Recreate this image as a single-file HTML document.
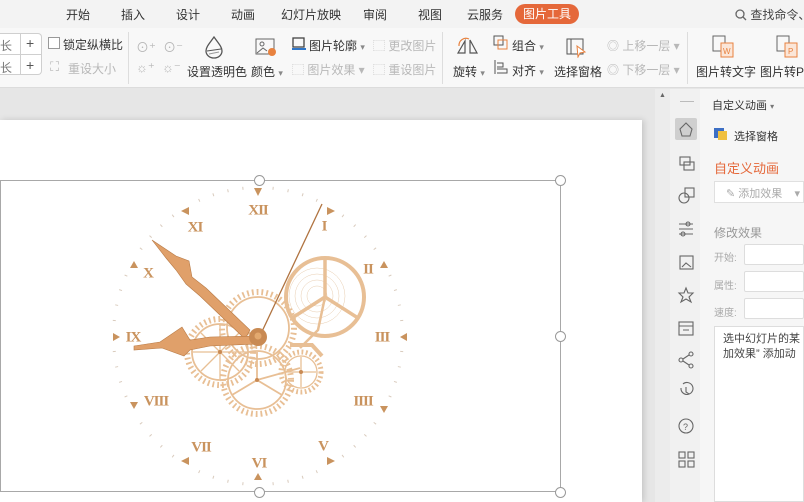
<!DOCTYPE html>
<html><head><meta charset="utf-8">
<style>
*{margin:0;padding:0;box-sizing:border-box}
body{width:804px;height:502px;overflow:hidden;background:#e6e6e6;font-family:"Liberation Sans","Noto Sans CJK SC",sans-serif;font-size:12px;color:#333;position:relative}
.a{position:absolute;white-space:nowrap}
.tab{top:6px;font-size:12px;color:#333}
.g{color:#b8b8b8}
.rb{font-size:12px}
.num{position:absolute;font-family:"Liberation Serif",serif;font-weight:bold;font-size:15px;color:#c9935e;transform:translate(-50%,-50%);letter-spacing:-1px}
</style></head><body>
<div class="a" style="left:0;top:0;width:804px;height:28px;background:#f3f3f3"></div>
<div class="a tab" style="left:66px">开始</div>
<div class="a tab" style="left:121px">插入</div>
<div class="a tab" style="left:176px">设计</div>
<div class="a tab" style="left:231px">动画</div>
<div class="a tab" style="left:281px">幻灯片放映</div>
<div class="a tab" style="left:363px">审阅</div>
<div class="a tab" style="left:418px">视图</div>
<div class="a tab" style="left:467px">云服务</div>
<div class="a" style="left:515px;top:4px;width:64px;height:20px;border-radius:10px;background:#e5683a;color:#fff;text-align:center;line-height:20px;font-size:12px">图片工具</div>
<div class="a" style="left:735px;top:6px;color:#444"><svg width="12" height="12" style="vertical-align:-2px"><circle cx="5" cy="5" r="4" fill="none" stroke="#666" stroke-width="1.3"/><line x1="8" y1="8" x2="11" y2="11" stroke="#666" stroke-width="1.3"/></svg> 查找命令、</div>
<div class="a" style="left:0;top:28px;width:804px;height:60px;background:#f8f8f8;border-bottom:1px solid #dcdcdc"></div>
<div class="a" style="left:0;top:33px;width:42px;height:42px;border:1px solid #cfcfcf;border-left:none;border-radius:0 4px 4px 0;background:#fff"></div>
<div class="a" style="left:0;top:54px;width:42px;height:1px;background:#cfcfcf"></div>
<div class="a" style="left:20px;top:33px;width:1px;height:42px;background:#cfcfcf"></div>
<div class="a" style="left:0;top:37px;color:#777">长</div>
<div class="a" style="left:0;top:59px;color:#777">长</div>
<div class="a" style="left:26px;top:35px;font-size:14px;color:#555">+</div>
<div class="a" style="left:26px;top:57px;font-size:14px;color:#555">+</div>
<div class="a" style="left:48px;top:37px;width:12px;height:12px;border:1px solid #999;background:#fff"></div>
<div class="a rb" style="left:63px;top:36px">锁定纵横比</div>
<div class="a rb g" style="left:68px;top:60px">重设大小</div>
<div class="a g" style="left:50px;top:59px;font-size:13px">⛶</div>
<div class="a" style="left:128px;top:32px;width:1px;height:52px;background:#ddd"></div>
<div class="a g" style="left:136px;top:37px;font-size:13px">⊙⁺&nbsp; ⊙⁻</div>
<div class="a g" style="left:136px;top:60px;font-size:13px">☼⁺&nbsp; ☼⁻</div>
<svg class="a" style="left:203px;top:35px" width="22" height="24"><path d="M11 2 C6 9 3 12 3 16 A8 7 0 0 0 19 16 C19 12 16 9 11 2Z" fill="none" stroke="#555" stroke-width="1.3"/><path d="M4 16 L18 14" stroke="#555"/><path d="M6 19 L16 17" stroke="#999"/></svg>
<div class="a rb" style="left:187px;top:63px">设置透明色</div>
<svg class="a" style="left:255px;top:37px" width="22" height="20"><rect x="1" y="2" width="18" height="15" fill="none" stroke="#666"/><circle cx="7" cy="7" r="2" fill="none" stroke="#666"/><path d="M2 16 L8 11 L12 14" fill="none" stroke="#666"/><circle cx="17" cy="15" r="4" fill="#e8823f"/></svg>
<div class="a rb" style="left:251px;top:63px">颜色 <span style="color:#888;font-size:9px">▾</span></div>
<svg class="a" style="left:292px;top:37px" width="14" height="14"><rect x="1" y="1" width="11" height="9" fill="none" stroke="#444" stroke-width="1.3"/><rect x="0" y="11" width="14" height="2" fill="#2e75c8"/></svg>
<div class="a rb" style="left:309px;top:37px">图片轮廓 <span style="color:#888;font-size:9px">▾</span></div>
<div class="a rb g" style="left:292px;top:61px">⬚ 图片效果 ▾</div>
<div class="a rb g" style="left:373px;top:37px">⬚ 更改图片</div>
<div class="a rb g" style="left:373px;top:61px">⬚ 重设图片</div>
<div class="a" style="left:442px;top:32px;width:1px;height:52px;background:#ddd"></div>
<svg class="a" style="left:455px;top:36px" width="26" height="20"><path d="M3 17 L10 5 L10 17Z M15 4 L22 17 L15 17Z" fill="none" stroke="#555" stroke-width="1.2"/><path d="M4 10 A7 7 0 0 1 14 3" fill="none" stroke="#e8823f" stroke-width="1.2"/></svg>
<div class="a rb" style="left:453px;top:63px">旋转 <span style="color:#888;font-size:9px">▾</span></div>
<svg class="a" style="left:493px;top:35px" width="16" height="16"><rect x="1" y="1" width="9" height="9" fill="none" stroke="#555"/><rect x="5" y="5" width="9" height="9" fill="none" stroke="#e8823f"/></svg>
<div class="a rb" style="left:512px;top:37px">组合 <span style="color:#888;font-size:9px">▾</span></div>
<svg class="a" style="left:493px;top:59px" width="16" height="16"><path d="M2 1 V15 M4 4 H10 V8 H4 M4 10 H14 V14 H4" fill="none" stroke="#555"/></svg>
<div class="a rb" style="left:512px;top:62px">对齐 <span style="color:#888;font-size:9px">▾</span></div>
<svg class="a" style="left:566px;top:38px" width="22" height="20"><rect x="1" y="1" width="16" height="15" fill="none" stroke="#555"/><line x1="5" y1="1" x2="5" y2="16" stroke="#555"/><path d="M11 8 L19 14 L14 15 L12 19Z" fill="#fff" stroke="#e8823f"/></svg>
<div class="a rb" style="left:554px;top:63px">选择窗格</div>
<div class="a rb g" style="left:607px;top:37px">◎ 上移一层 ▾</div>
<div class="a rb g" style="left:607px;top:61px">◎ 下移一层 ▾</div>
<div class="a" style="left:687px;top:32px;width:1px;height:52px;background:#ddd"></div>
<svg class="a" style="left:711px;top:35px" width="26" height="24"><rect x="2" y="1" width="12" height="15" fill="none" stroke="#666"/><rect x="10" y="8" width="12" height="14" fill="#fbe6d8" stroke="#e8823f"/><text x="12" y="19" font-size="8" fill="#e8823f" font-family="Liberation Sans">W</text></svg>
<div class="a rb" style="left:696px;top:63px">图片转文字</div>
<svg class="a" style="left:775px;top:35px" width="26" height="24"><rect x="2" y="1" width="12" height="15" fill="none" stroke="#666"/><rect x="10" y="8" width="12" height="14" fill="#fbe6d8" stroke="#e8823f"/><text x="13" y="19" font-size="8" fill="#e8823f" font-family="Liberation Sans">P</text></svg>
<div class="a rb" style="left:760px;top:63px">图片转P</div>
<div class="a" style="left:0;top:120px;width:642px;height:382px;background:#fff;box-shadow:2px 0 6px rgba(0,0,0,.15)"></div>
<div class="a" style="left:655px;top:89px;width:15px;height:413px;background:#ececec"></div>
<div class="a" style="left:659px;top:92px;font-size:7px;color:#666">▲</div>
<svg class="a" style="left:0;top:120px" width="642" height="382">
<g transform="translate(0,-120)">
<rect x="0.5" y="180.5" width="560" height="311" fill="none" stroke="#a8a8a8"/>
<g fill="none" stroke="#e8cdb0" stroke-width="0.5">
<circle cx="317" cy="296" r="10"/><circle cx="317" cy="296" r="16"/><circle cx="317" cy="296" r="22"/><circle cx="317" cy="296" r="28"/>
</g>
<g fill="none" stroke="#e8bf95">
<circle cx="325" cy="297" r="39" stroke-width="4"/>
<path d="M325 297 L325 258 M325 297 L292 318 M325 297 L358 318" stroke-width="3.5"/>
<path d="M325 297 L318 330 L300 348" stroke-width="2.5"/>
<circle cx="220" cy="352" r="33" stroke-width="6" stroke-dasharray="1.8 3"/>
<circle cx="220" cy="352" r="28" stroke-width="1.8"/>
<path d="M220 325 V379 M193 352 H247 M201 333 L239 371 M239 333 L201 371" stroke-width="1.3"/>
<circle cx="258" cy="328" r="36" stroke-width="6" stroke-dasharray="1.8 3"/>
<circle cx="258" cy="328" r="31" stroke-width="1.8"/>
<circle cx="257" cy="380" r="34" stroke-width="6" stroke-dasharray="1.8 3"/>
<circle cx="257" cy="380" r="29" stroke-width="1.8"/>
<path d="M257 380 L257 352 M257 380 L232 395 M257 380 L282 395 M257 380 L300 368" stroke-width="1.8"/>
<circle cx="301" cy="372" r="20" stroke-width="5" stroke-dasharray="1.8 2.5"/>
<circle cx="301" cy="372" r="16" stroke-width="1.3"/>
<path d="M286 372 H316 M301 357 V387" stroke-width="1.3"/>
<path d="M290 345 L312 345 L322 356" stroke-width="4"/>
</g>
<g fill="#c98a53"><circle cx="220" cy="352" r="2"/><circle cx="257" cy="380" r="2"/><circle cx="301" cy="372" r="2"/></g>
<g stroke="#d9cbbd" stroke-width="1" id="t"></g>
<g fill="#c9935e">
<path d="M254 188 L262 188 L258 196Z"/><path d="M254 480 L262 480 L258 473Z"/>
<path d="M113 333 L113 341 L120 337Z"/><path d="M407 333 L407 341 L400 337Z"/>
<path d="M327 207 L335 211 L327 215Z"/><path d="M189 207 L181 211 L189 215Z"/>
<path d="M130 268 L134 261 L138 268Z"/><path d="M380 268 L384 261 L388 268Z"/>
<path d="M130 402 L138 402 L134 409Z"/><path d="M380 406 L388 406 L384 413Z"/>
<path d="M189 457 L181 461 L189 465Z"/><path d="M327 457 L335 461 L327 465Z"/>
</g>
<path d="M322 204 L258 340" stroke="#b07340" stroke-width="1.3"/>
<path d="M152 240 L176 256 L189 261 L192 277 L206 288 L250 330 L245 339 L200 296 L186 284 L176 270 L166 258 Z" fill="#e0a06a" stroke="#b87a45" stroke-width="0.6"/>
<path d="M134 346 L160 342 L182 327 L190 340 L210 337 L256 336 L256 344 L210 346 L190 350 L184 356 L162 348 L134 350Z" fill="#e0a06a" stroke="#b87a45" stroke-width="0.6"/>
<circle cx="258" cy="337" r="9" fill="#c98a53"/>
<circle cx="258" cy="336" r="3.5" fill="#e3a96f"/>
</g>
</svg>
<div class="a" style="left:254px;top:175px;width:11px;height:11px;border:1px solid #999;border-radius:50%;background:#fff"></div>
<div class="a" style="left:555px;top:175px;width:11px;height:11px;border:1px solid #999;border-radius:50%;background:#fff"></div>
<div class="a" style="left:555px;top:331px;width:11px;height:11px;border:1px solid #999;border-radius:50%;background:#fff"></div>
<div class="a" style="left:254px;top:487px;width:11px;height:11px;border:1px solid #999;border-radius:50%;background:#fff"></div>
<div class="a" style="left:555px;top:487px;width:11px;height:11px;border:1px solid #999;border-radius:50%;background:#fff"></div>
<div class="num" style="left:258px;top:211px">XII</div>
<div class="num" style="left:324px;top:227px">I</div>
<div class="num" style="left:368px;top:270px">II</div>
<div class="num" style="left:382px;top:338px">III</div>
<div class="num" style="left:363px;top:402px">IIII</div>
<div class="num" style="left:323px;top:447px">V</div>
<div class="num" style="left:259px;top:464px">VI</div>
<div class="num" style="left:201px;top:448px">VII</div>
<div class="num" style="left:156px;top:402px">VIII</div>
<div class="num" style="left:133px;top:338px">IX</div>
<div class="num" style="left:148px;top:274px">X</div>
<div class="num" style="left:195px;top:228px">XI</div>
<div class="a" style="left:670px;top:89px;width:30px;height:413px;background:#f1f1f1"></div>
<div class="a" style="left:680px;top:101px;width:14px;height:1px;background:#bbb"></div>
<div class="a" style="left:675px;top:118px;width:22px;height:22px;background:#cfcfcf;border-radius:2px"></div>
<svg class="a" style="left:677px;top:120px" width="30" height="370">
<g fill="none" stroke="#666" stroke-width="1.1">
<path d="M9 3 L15 9 L13 16 L5 16 L3 9Z"/>
<rect x="3" y="37" width="10" height="8"/><rect x="7" y="42" width="10" height="8"/>
<circle cx="7" cy="78" r="5"/><rect x="8" y="68" width="9" height="9"/>
<path d="M2 104 H16 M2 109 H16 M2 114 H16"/><circle cx="11" cy="104" r="2"/><circle cx="6" cy="114" r="2"/>
<rect x="3" y="136" width="13" height="13"/><path d="M5 147 L9 143 L14 147"/>
<path d="M9 168 L11 173 L16 173 L12 177 L14 182 L9 179 L4 182 L6 177 L2 173 L7 173Z"/>
<rect x="2" y="202" width="14" height="13"/><path d="M2 206 H16 M6 210 H12"/>
<circle cx="4" cy="240" r="2"/><circle cx="14" cy="234" r="2"/><circle cx="14" cy="246" r="2"/><path d="M6 239 L12 235 M6 241 L12 245"/>
<path d="M4 268 A6 6 0 1 0 6 264 M9 267 V272 L12 274"/>
<circle cx="9" cy="306" r="7"/><text x="6" y="310" font-size="9" fill="#666" stroke="none">?</text>
<rect x="2" y="332" width="6" height="6"/><rect x="11" y="332" width="6" height="6"/><rect x="2" y="341" width="6" height="6"/><rect x="11" y="341" width="6" height="6"/>
</g></svg>
<div class="a" style="left:700px;top:89px;width:104px;height:413px;background:#f6f6f6"></div>
<div class="a" style="left:712px;top:97px;font-size:11px">自定义动画 <span style="font-size:8px;color:#777">▾</span></div>
<svg class="a" style="left:713px;top:127px" width="16" height="16"><rect x="1" y="1" width="10" height="10" fill="#3d6fc4"/><rect x="5" y="4" width="9" height="9" fill="#f0c040"/></svg>
<div class="a" style="left:734px;top:128px;font-size:11px">选择窗格</div>
<div class="a" style="left:714px;top:158px;font-size:13px;color:#e5683a">自定义动画</div>
<div class="a" style="left:714px;top:181px;width:90px;height:22px;background:#fff;border:1px solid #e0e0e0"></div>
<div class="a" style="left:726px;top:185px;font-size:11px;color:#aaa">✎ 添加效果&nbsp;&nbsp;&nbsp;&nbsp;▾</div>
<div class="a" style="left:714px;top:224px;font-size:12px;color:#999">修改效果</div>
<div class="a" style="left:714px;top:249px;font-size:10px;color:#aaa">开始:</div>
<div class="a" style="left:714px;top:277px;font-size:10px;color:#aaa">属性:</div>
<div class="a" style="left:714px;top:304px;font-size:10px;color:#aaa">速度:</div>
<div class="a" style="left:744px;top:244px;width:60px;height:21px;background:#fff;border:1px solid #ddd;border-radius:2px"></div>
<div class="a" style="left:744px;top:271px;width:60px;height:21px;background:#fff;border:1px solid #ddd;border-radius:2px"></div>
<div class="a" style="left:744px;top:298px;width:60px;height:21px;background:#fff;border:1px solid #ddd;border-radius:2px"></div>
<div class="a" style="left:714px;top:326px;width:90px;height:176px;background:#fff;border:1px solid #ddd"></div>
<div class="a" style="left:723px;top:332px;font-size:11px;color:#444;line-height:15px">选中幻灯片的某<br>加效果” 添加动</div>
<script>
var g=document.getElementById('t'),s='';
for(var i=0;i<60;i++){if(i%5==0)continue;var a=i*Math.PI/30;var cx=258,cy=336,rx=146,ry=150;
var x1=cx+Math.sin(a)*rx,y1=cy-Math.cos(a)*ry,x2=cx+Math.sin(a)*(rx-3),y2=cy-Math.cos(a)*(ry-3);
s+='<line x1="'+x1+'" y1="'+y1+'" x2="'+x2+'" y2="'+y2+'"/>';}
g.innerHTML=s;
</script>
</body></html>
